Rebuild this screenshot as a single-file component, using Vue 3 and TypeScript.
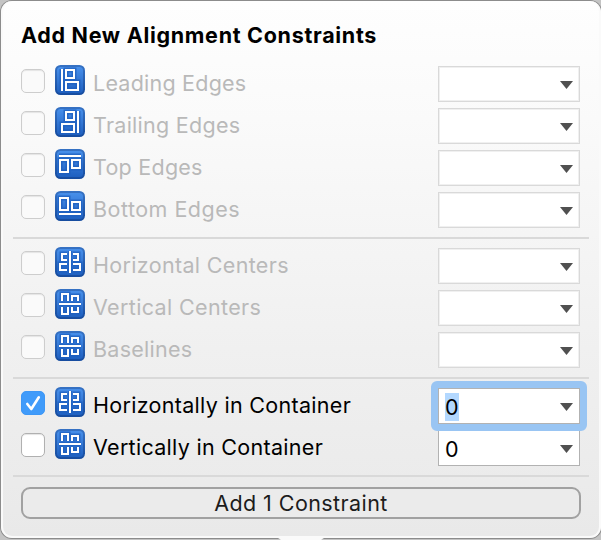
<script setup lang="ts">
interface Row {
  label: string
  icon: string
  value: string
  state: 'disabled' | 'checked' | 'unchecked'
  spacing: number
}

const center = 'M15 4v22M12 7H7v6h5M18 7h5v6h-5M12 17H5v6h7M18 17h7v6h-7'
const middle = 'M4 15h22M7 12V5h6v7M17 12V7h6v5M7 18v7h6v-7M17 18v5h6v-5'

const groups: Row[][] = [
  [
    { label: 'Leading Edges', icon: 'M7 4v22M11 5h8v8h-8zM11 17h12v8h-12z', value: '', state: 'disabled', spacing: 0.23 },
    { label: 'Trailing Edges', icon: 'M23 4v22M11 5h8v8h-8zM7 17h12v8h-12z', value: '', state: 'disabled', spacing: 0.27 },
    { label: 'Top Edges', icon: 'M4 7h22M5 11h8v12h-8zM17 11h8v8h-8z', value: '', state: 'disabled', spacing: 0.25 },
    { label: 'Bottom Edges', icon: 'M4 23h22M5 7h8v12h-8zM17 11h8v8h-8z', value: '', state: 'disabled', spacing: 0.48 },
  ],
  [
    { label: 'Horizontal Centers', icon: center, value: '', state: 'disabled', spacing: 0.33 },
    { label: 'Vertical Centers', icon: middle, value: '', state: 'disabled', spacing: 0.36 },
    { label: 'Baselines', icon: middle, value: '', state: 'disabled', spacing: 0.27 },
  ],
  [
    { label: 'Horizontally in Container', icon: center, value: '0', state: 'checked', spacing: 0.3 },
    { label: 'Vertically in Container', icon: middle, value: '0', state: 'unchecked', spacing: 0.3 },
  ],
]
</script>

<template>
  <main class="window">
    <section class="popover">
      <h1 class="title">Add New Alignment Constraints</h1>
      <div v-for="(group, g) in groups" :key="g" class="group">
        <div v-for="row in group" :key="row.label" class="row" :class="row.state">
          <span class="check">
            <svg v-if="row.state === 'checked'" viewBox="0 0 24 24"><path d="M6.3 13l4 5L17.8 6.3" /></svg>
          </span>
          <svg class="icon" viewBox="0 0 30 30">
            <defs>
              <linearGradient id="tile" x1="0" y1="0" x2="0" y2="1">
                <stop offset="0" stop-color="#478fea" />
                <stop offset="1" stop-color="#1f60c0" />
              </linearGradient>
              <linearGradient id="rim" x1="0" y1="0" x2="0" y2="1">
                <stop offset="0" stop-color="#3672c4" />
                <stop offset="1" stop-color="#164c9f" />
              </linearGradient>
            </defs>
            <rect width="30" height="30" rx="5.5" fill="url(#rim)" />
            <rect x="2" y="2" width="26" height="26" rx="3.5" fill="url(#tile)" />
            <path class="shade" :d="row.icon" />
            <path class="glyph" :d="row.icon" />
          </svg>
          <span class="label" :style="{ letterSpacing: row.spacing + 'px' }">{{ row.label }}</span>
          <span class="combo">
            <span class="value">{{ row.value }}</span>
            <svg class="arrow" viewBox="0 0 13 8"><path d="M0 0h13L6.5 8z" /></svg>
          </span>
        </div>
      </div>
      <button class="add">Add 1 Constraint</button>
    </section>
    <svg class="tip" viewBox="0 0 56 4"><path d="M0 0h56v1q-5 0-8 3H8q-3-3-8-3z" /></svg>
  </main>
</template>

<style>
body { margin: 0; background: #c4c4c4; }
</style>

<style scoped>
* { box-sizing: border-box; }
.window {
  position: relative;
  width: 601px;
  height: 540px;
  overflow: hidden;
  padding: 1px 0 0 1px;
  background: #c4c4c4;
  font-family: Inter, "Liberation Sans", sans-serif;
  font-size: 21.5px;
}
.popover {
  width: 600px;
  height: 537px;
  padding: 0 10px;
  border: 2px solid #fafafa;
  border-top-width: 0;
  border-radius: 11px;
  background: linear-gradient(#fefefe, #fafafa 22%, #f0f0f0 65%, #e9e9e9);
  box-shadow: 0 0 0 1px #8c8c8c;
}
.title {
  height: 63px;
  margin: 0;
  padding: 20px 0 0 8px;
  font-size: 21.5px;
  line-height: 28px;
  font-weight: 700;
  letter-spacing: 0.7px;
  color: #000;
  white-space: nowrap;
}
.group {
  width: 576px;
  padding-bottom: 5px;
  margin-bottom: 7px;
  border-bottom: 2px solid #d9d9d9;
}
.group:last-of-type { margin-bottom: 10px; }
.row {
  display: flex;
  align-items: flex-start;
  height: 42px;
  padding: 1px 9px 0 8px;
}
.check {
  width: 24px;
  height: 24px;
  margin: 4px 10px 0 0;
  border: 1px solid #cdcdcd;
  border-radius: 5px;
  background: #fafafa;
  box-shadow: inset 0 1px 1px #e4e4e4;
}
.unchecked .check { background: #fff; border-color: #b0b0b0; }
.checked .check { background: #409bfa; border-color: #3d97f6; box-shadow: none; }
.check svg { display: block; width: 24px; height: 24px; margin: -1px; }
.check path { fill: none; stroke: #fff; stroke-width: 2.6; stroke-linecap: round; stroke-linejoin: round; }
.icon { width: 30px; height: 30px; }
.icon path { fill: none; }
.shade { stroke: #1d5fbd; stroke-width: 5; stroke-opacity: 0.75; }
.glyph { stroke: #fff; stroke-width: 2; }
.label {
  flex: 1;
  padding: 4px 0 0 8px;
  line-height: 28px;
  white-space: nowrap;
  color: #000;
}
.disabled .label { color: #b9b9b9; }
.combo {
  display: flex;
  align-items: center;
  justify-content: space-between;
  width: 142px;
  height: 36px;
  margin-top: 1px;
  padding: 0 6px;
  border: 1px solid #d9d9d9;
  background: #fff;
  box-shadow: inset 0 0 0 1px #f0f0f0;
}
.unchecked .combo,
.checked .combo { border-color: #b2b2b2; box-shadow: none; }
.checked .combo { position: relative; }
.checked .combo::before {
  content: "";
  position: absolute;
  inset: -8px;
  border: 7px solid #99c5f3;
  border-radius: 6px;
}
.value { margin-top: 2px; line-height: 28px; }
.checked .value { background: #b3d8ff; }
.checked .value { height: 28px; }
.arrow { width: 13px; height: 8px; margin-top: 2px; fill: #505050; }
.add {
  display: block;
  width: 560px;
  height: 32px;
  margin-left: 8px;
  padding: 0;
  border: 2px solid #a1a1a1;
  border-radius: 9px;
  background: #ebebeb;
  color: #1c1c1c;
  font: inherit;
  line-height: 28px;
  letter-spacing: 0.42px;
}
.tip { position: absolute; left: 273px; top: 536px; width: 56px; height: 4px; fill: #fafafa; }
</style>
